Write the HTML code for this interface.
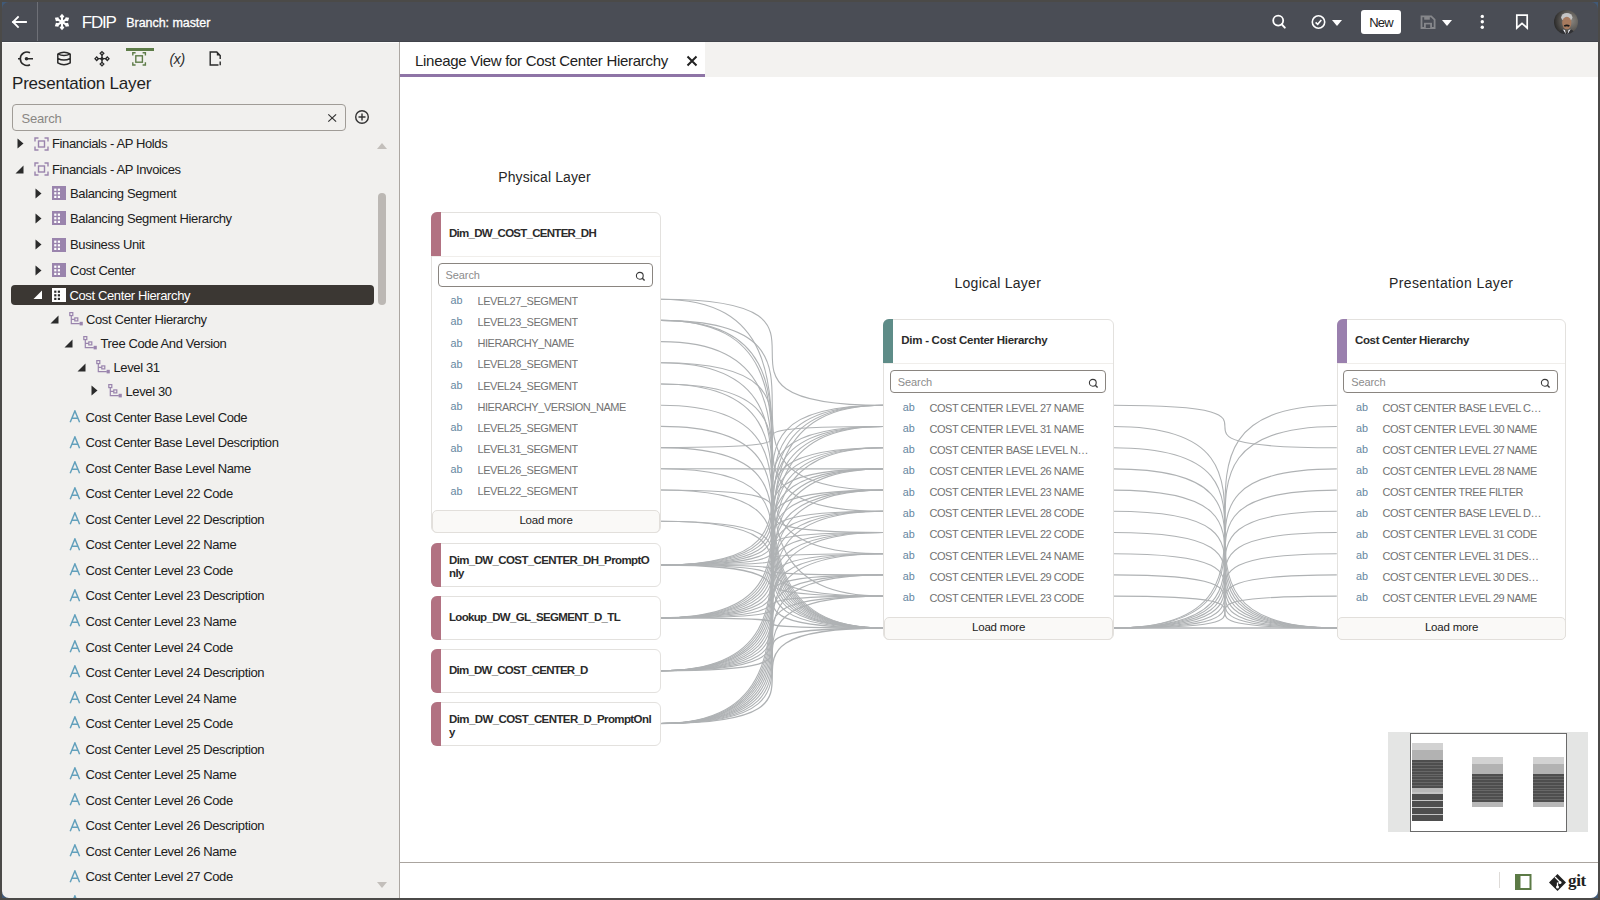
<!DOCTYPE html>
<html><head><meta charset="utf-8"><style>
html,body{margin:0;padding:0;width:1600px;height:900px;overflow:hidden;background:#4b4a48;}
.r{position:absolute;}
.t{position:absolute;white-space:nowrap;line-height:1;font-family:"Liberation Sans", sans-serif;}
</style></head><body>
<div class="r" style="left:0.00px;top:0.00px;width:1600.00px;height:900.00px;background:#4b4a48;"></div>
<div class="r" style="left:2.00px;top:2.00px;width:1596.00px;height:896.00px;background:#ffffff;"></div>
<div class="r" style="left:2.00px;top:2.00px;width:1596.00px;height:39.50px;background:#4a4d55;"></div>
<div class="r" style="left:37.00px;top:2.00px;width:1.00px;height:39.50px;background:#6e7077;"></div>
<div class="r" style="left:2.00px;top:40.50px;width:1596.00px;height:1.00px;background:#41444b;"></div>
<svg class="r" style="left:10.00px;top:14.00px" width="20" height="16" viewBox="0 0 20 16"><path d="M3 8 H16 M8 3 L3 8 L8 13" stroke="#fff" stroke-width="1.8" fill="none" stroke-linecap="square"/></svg>
<svg class="r" style="left:53.00px;top:13.00px" width="18" height="18" viewBox="0 0 18 18"><g transform="translate(9 9) scale(1.02) translate(-9 -9)"><g transform="rotate(0 9 9)"><path d="M9 0.9 L11.3 3.5 L9 6.1 L6.7 3.5 Z" fill="#fff"/><rect x="8" y="4" width="2" height="5" fill="#fff"/></g><g transform="rotate(60 9 9)"><path d="M9 0.9 L11.3 3.5 L9 6.1 L6.7 3.5 Z" fill="#fff"/><rect x="8" y="4" width="2" height="5" fill="#fff"/></g><g transform="rotate(120 9 9)"><path d="M9 0.9 L11.3 3.5 L9 6.1 L6.7 3.5 Z" fill="#fff"/><rect x="8" y="4" width="2" height="5" fill="#fff"/></g><g transform="rotate(180 9 9)"><path d="M9 0.9 L11.3 3.5 L9 6.1 L6.7 3.5 Z" fill="#fff"/><rect x="8" y="4" width="2" height="5" fill="#fff"/></g><g transform="rotate(240 9 9)"><path d="M9 0.9 L11.3 3.5 L9 6.1 L6.7 3.5 Z" fill="#fff"/><rect x="8" y="4" width="2" height="5" fill="#fff"/></g><g transform="rotate(300 9 9)"><path d="M9 0.9 L11.3 3.5 L9 6.1 L6.7 3.5 Z" fill="#fff"/><rect x="8" y="4" width="2" height="5" fill="#fff"/></g></g><circle cx="9" cy="9" r="1.7" fill="#fff"/></svg>
<div class="t" style="left:81.80px;top:13.81px;font-size:17px;color:#fff;font-weight:400;letter-spacing:-1.234px;">FDIP</div>
<div class="t" style="left:126.30px;top:16.72px;font-size:12.5px;color:#fff;font-weight:400;letter-spacing:-0.055px;-webkit-text-stroke:0.3px #fff;">Branch: master</div>
<svg class="r" style="left:1268.00px;top:12.00px" width="20" height="20" viewBox="0 0 20 20"><circle cx="10.2" cy="8.6" r="5" stroke="#fff" stroke-width="1.8" fill="none"/><path d="M13.8 12.3 L16.8 15.6" stroke="#fff" stroke-width="2" stroke-linecap="round"/></svg>
<svg class="r" style="left:1309.00px;top:13.00px" width="19" height="19" viewBox="0 0 19 19"><circle cx="9.5" cy="9" r="6.2" stroke="#fff" stroke-width="1.6" fill="none"/><path d="M6.6 9.3 L8.7 11.3 L12.3 7" stroke="#fff" stroke-width="1.6" fill="none"/></svg>
<svg class="r" style="left:1331.00px;top:19.00px" width="12" height="8" viewBox="0 0 12 8"><path d="M1 1 H11 L6 7 Z" fill="#fff"/></svg>
<div class="r" style="left:1360.50px;top:10.00px;width:40.00px;height:23.50px;background:#fff;border-radius:3px;"></div>
<div class="t" style="left:1081.00px;width:600px;text-align:center;top:16.00px;font-size:13px;color:#222;font-weight:400;letter-spacing:-0.839px;">New</div>
<svg class="r" style="left:1420.00px;top:15.00px" width="16" height="15" viewBox="0 0 16 15"><path d="M1.5 1.3 H11.2 L14.6 4.7 V13 H1.5 Z" stroke="#86878b" stroke-width="1.8" fill="none"/><rect x="4.2" y="1.5" width="5.6" height="3.2" fill="#86878b"/><rect x="4" y="7.8" width="8" height="5" fill="#86878b"/><rect x="5.8" y="9.4" width="4.4" height="3.6" fill="#4a4d55"/></svg>
<svg class="r" style="left:1441.00px;top:19.00px" width="12" height="8" viewBox="0 0 12 8"><path d="M1 1 H11 L6 7 Z" fill="#fff"/></svg>
<svg class="r" style="left:1479.00px;top:13.00px" width="7" height="18" viewBox="0 0 7 18"><circle cx="3.3" cy="3.4" r="1.7" fill="#fff"/><circle cx="3.3" cy="8.8" r="1.7" fill="#fff"/><circle cx="3.3" cy="14.3" r="1.7" fill="#fff"/></svg>
<svg class="r" style="left:1515.00px;top:14.00px" width="14" height="16" viewBox="0 0 14 16"><path d="M1.8 1.2 H12.2 V14 L7 9.3 L1.8 14 Z" stroke="#fff" stroke-width="1.7" fill="none" stroke-linejoin="miter"/></svg>
<svg class="r" style="left:1554.00px;top:10.00px" width="24" height="24" viewBox="0 0 24 24"><defs><radialGradient id="av" cx="0.7" cy="0.45" r="0.75"><stop offset="0" stop-color="#8a8782"/><stop offset="0.55" stop-color="#5a5753"/><stop offset="1" stop-color="#222"/></radialGradient><clipPath id="avc"><circle cx="12" cy="12" r="12"/></clipPath></defs><g clip-path="url(#avc)"><rect width="24" height="24" fill="url(#av)"/><ellipse cx="12.8" cy="7.2" rx="5.6" ry="4.3" fill="#c4c4c4"/><ellipse cx="12.8" cy="13" rx="4.6" ry="6.3" fill="#a77a5e"/><path d="M10.2 16 Q12.8 14.6 15.4 16" stroke="#1a1a1a" stroke-width="1.7" fill="none"/><path d="M1 25 L7.5 19.5 L12.5 23 L17.5 19.5 L24 25 Z" fill="#2f3034"/><path d="M9 19.5 L12 24.5 L11 20 Z M16.5 19.5 L13.5 24.5 L14.5 20 Z" fill="#e9ecf5"/></g></svg>
<div class="r" style="left:2.00px;top:41.50px;width:397.00px;height:856.50px;background:#f1f0ee;"></div>
<div class="r" style="left:399.00px;top:41.50px;width:1.00px;height:856.50px;background:#aca7a2;"></div>
<div class="r" style="left:2.00px;top:41.50px;width:397.00px;height:1.00px;background:#fcfcfb;"></div>
<div class="r" style="left:126.00px;top:48.00px;width:27.50px;height:2.50px;background:#5e7c48;"></div>
<svg class="r" style="left:16.00px;top:50.00px" width="20" height="18" viewBox="0 0 20 18"><path d="M14 2.7 A6.7 6.7 0 1 0 14 14.7" stroke="#2a2a2a" stroke-width="1.6" fill="none"/><path d="M2 8.7 H5 M9 8.7 H17" stroke="#2a2a2a" stroke-width="1.6"/><circle cx="10.5" cy="8.7" r="1.8" fill="#2a2a2a"/></svg>
<svg class="r" style="left:56.00px;top:50.00px" width="16" height="17" viewBox="0 0 16 17"><g stroke="#2a2a2a" stroke-width="1.5" fill="none"><path d="M1.8 3.8 Q8 0.6 14.2 3.8 M1.8 3.8 Q8 7 14.2 3.8 M1.8 3.8 V12.8 Q8 16.6 14.2 12.8 V3.8 M1.8 8.3 Q8 11.8 14.2 8.3"/></g></svg>
<svg class="r" style="left:93.00px;top:50.00px" width="18" height="18" viewBox="0 0 18 18"><g stroke="#2a2a2a" stroke-width="1.3" fill="none"><path d="M9 4.5 V13 M4.5 8.7 H13.5"/><path d="M9 1.6 L10.8 3.3 L9 5 L7.2 3.3 Z M9 12.4 L10.8 14.1 L9 15.8 L7.2 14.1 Z M2 8.7 L3.7 6.9 L5.4 8.7 L3.7 10.5 Z M12.6 8.7 L14.3 6.9 L16 8.7 L14.3 10.5 Z M9 7.4 L10.3 8.7 L9 10 L7.7 8.7 Z"/></g></svg>
<svg class="r" style="left:132.00px;top:51.50px" width="15" height="15" viewBox="0 0 15 15"><g stroke="#5e7c48" stroke-width="1.4" fill="none"><path d="M0.8 3.6 V0.8 H3.6 M10.6 0.8 H13.4 V3.6 M13.4 10.2 V13 H10.6 M3.6 13 H0.8 V10.2"/><rect x="3.8" y="3.8" width="6.6" height="6.4"/></g></svg>
<div class="t" style="left:169.50px;top:52.15px;font-size:14px;color:#2a2a2a;font-weight:400;letter-spacing:-0.3px;font-style:italic;">(x)</div>
<svg class="r" style="left:209.00px;top:51.00px" width="14" height="16" viewBox="0 0 14 16"><path d="M11.2 8 V4.5 L7.8 1 H1.2 V14 H9.5" stroke="#2a2a2a" stroke-width="1.4" fill="none"/><path d="M7.8 1 V4.5 H11.2 Z" fill="#2a2a2a"/><path d="M11.2 10.5 V14.2" stroke="#2a2a2a" stroke-width="1.4"/></svg>
<div class="t" style="left:12.00px;top:75.11px;font-size:17px;color:#1f1f1f;font-weight:400;letter-spacing:-0.2px;">Presentation Layer</div>
<div class="r" style="left:12.30px;top:103.80px;width:333.50px;height:27.40px;border:1.3px solid #a09c97;border-radius:4px;box-sizing:border-box;background:#f1f0ee;"></div>
<div class="t" style="left:21.50px;top:111.50px;font-size:13px;color:#8a8784;font-weight:400;letter-spacing:-0.2px;">Search</div>
<svg class="r" style="left:327.00px;top:112.50px" width="10" height="10" viewBox="0 0 10 10"><path d="M1.3 1.4 L9.1 8.6 M9.1 1.4 L1.3 8.6" stroke="#333" stroke-width="1.2"/></svg>
<svg class="r" style="left:354.00px;top:109.00px" width="16" height="16" viewBox="0 0 16 16"><circle cx="8" cy="8" r="6.3" stroke="#333" stroke-width="1.4" fill="none"/><path d="M8 4.5 V11.5 M4.5 8 H11.5" stroke="#333" stroke-width="1.4"/></svg>
<div class="r" style="left:378.00px;top:193.00px;width:8.00px;height:112.00px;background:#bcb8b4;border-radius:4px;"></div>
<svg class="r" style="left:376.00px;top:141.00px" width="12" height="9" viewBox="0 0 12 9"><path d="M1 8 L6 2 L11 8 Z" fill="#c3bfbb"/></svg>
<svg class="r" style="left:376.00px;top:881.00px" width="12" height="9" viewBox="0 0 12 9"><path d="M1 1 L6 7 L11 1 Z" fill="#c3bfbb"/></svg>
<svg class="r" style="left:17.00px;top:138.00px" width="7" height="11" viewBox="0 0 7 11"><path d="M0.5 0.5 L6.5 5.5 L0.5 10.5 Z" fill="#2b2b2b"/></svg>
<svg class="r" style="left:34.00px;top:136.50px" width="15" height="14" viewBox="0 0 15 14"><g stroke="#9a84ad" stroke-width="1.4" fill="none"><path d="M1 4.5 V1 H4.5 M10.5 1 H14 V4.5 M14 9.5 V13 H10.5 M4.5 13 H1 V9.5"/><rect x="4.5" y="4" width="6" height="6"/></g></svg>
<div class="t" style="left:52.00px;top:137.10px;font-size:13px;color:#202020;font-weight:400;letter-spacing:-0.38px;">Financials - AP Holds</div>
<svg class="r" style="left:15.00px;top:164.65px" width="9" height="9" viewBox="0 0 9 9"><path d="M8.5 0.5 V8.5 H0.5 Z" fill="#2b2b2b"/></svg>
<svg class="r" style="left:34.00px;top:162.15px" width="15" height="14" viewBox="0 0 15 14"><g stroke="#9a84ad" stroke-width="1.4" fill="none"><path d="M1 4.5 V1 H4.5 M10.5 1 H14 V4.5 M14 9.5 V13 H10.5 M4.5 13 H1 V9.5"/><rect x="4.5" y="4" width="6" height="6"/></g></svg>
<div class="t" style="left:52.00px;top:162.75px;font-size:13px;color:#202020;font-weight:400;letter-spacing:-0.38px;">Financials - AP Invoices</div>
<svg class="r" style="left:35.00px;top:187.90px" width="7" height="11" viewBox="0 0 7 11"><path d="M0.5 0.5 L6.5 5.5 L0.5 10.5 Z" fill="#2b2b2b"/></svg>
<svg class="r" style="left:52.00px;top:186.40px" width="14" height="14" viewBox="0 0 14 14"><rect x="0" y="0" width="14" height="14" fill="#9a84ad"/><rect x="2.2" y="2.6" width="2.2" height="2.2" fill="#fff"/><rect x="5.800000000000001" y="2.6" width="2.2" height="2.2" fill="#fff"/><rect x="2.2" y="6.2" width="2.2" height="2.2" fill="#fff"/><rect x="5.800000000000001" y="6.2" width="2.2" height="2.2" fill="#fff"/><rect x="2.2" y="9.8" width="2.2" height="2.2" fill="#fff"/><rect x="5.800000000000001" y="9.8" width="2.2" height="2.2" fill="#fff"/></svg>
<div class="t" style="left:70.00px;top:187.00px;font-size:13px;color:#202020;font-weight:400;letter-spacing:-0.38px;">Balancing Segment</div>
<svg class="r" style="left:35.00px;top:212.90px" width="7" height="11" viewBox="0 0 7 11"><path d="M0.5 0.5 L6.5 5.5 L0.5 10.5 Z" fill="#2b2b2b"/></svg>
<svg class="r" style="left:52.00px;top:211.40px" width="14" height="14" viewBox="0 0 14 14"><rect x="0" y="0" width="14" height="14" fill="#9a84ad"/><rect x="2.2" y="2.6" width="2.2" height="2.2" fill="#fff"/><rect x="5.800000000000001" y="2.6" width="2.2" height="2.2" fill="#fff"/><rect x="2.2" y="6.2" width="2.2" height="2.2" fill="#fff"/><rect x="5.800000000000001" y="6.2" width="2.2" height="2.2" fill="#fff"/><rect x="2.2" y="9.8" width="2.2" height="2.2" fill="#fff"/><rect x="5.800000000000001" y="9.8" width="2.2" height="2.2" fill="#fff"/></svg>
<div class="t" style="left:70.00px;top:212.00px;font-size:13px;color:#202020;font-weight:400;letter-spacing:-0.38px;">Balancing Segment Hierarchy</div>
<svg class="r" style="left:35.00px;top:239.15px" width="7" height="11" viewBox="0 0 7 11"><path d="M0.5 0.5 L6.5 5.5 L0.5 10.5 Z" fill="#2b2b2b"/></svg>
<svg class="r" style="left:52.00px;top:237.65px" width="14" height="14" viewBox="0 0 14 14"><rect x="0" y="0" width="14" height="14" fill="#9a84ad"/><rect x="2.2" y="2.6" width="2.2" height="2.2" fill="#fff"/><rect x="5.800000000000001" y="2.6" width="2.2" height="2.2" fill="#fff"/><rect x="2.2" y="6.2" width="2.2" height="2.2" fill="#fff"/><rect x="5.800000000000001" y="6.2" width="2.2" height="2.2" fill="#fff"/><rect x="2.2" y="9.8" width="2.2" height="2.2" fill="#fff"/><rect x="5.800000000000001" y="9.8" width="2.2" height="2.2" fill="#fff"/></svg>
<div class="t" style="left:70.00px;top:238.25px;font-size:13px;color:#202020;font-weight:400;letter-spacing:-0.38px;">Business Unit</div>
<svg class="r" style="left:35.00px;top:264.90px" width="7" height="11" viewBox="0 0 7 11"><path d="M0.5 0.5 L6.5 5.5 L0.5 10.5 Z" fill="#2b2b2b"/></svg>
<svg class="r" style="left:52.00px;top:263.40px" width="14" height="14" viewBox="0 0 14 14"><rect x="0" y="0" width="14" height="14" fill="#9a84ad"/><rect x="2.2" y="2.6" width="2.2" height="2.2" fill="#fff"/><rect x="5.800000000000001" y="2.6" width="2.2" height="2.2" fill="#fff"/><rect x="2.2" y="6.2" width="2.2" height="2.2" fill="#fff"/><rect x="5.800000000000001" y="6.2" width="2.2" height="2.2" fill="#fff"/><rect x="2.2" y="9.8" width="2.2" height="2.2" fill="#fff"/><rect x="5.800000000000001" y="9.8" width="2.2" height="2.2" fill="#fff"/></svg>
<div class="t" style="left:70.00px;top:264.00px;font-size:13px;color:#202020;font-weight:400;letter-spacing:-0.38px;">Cost Center</div>
<div class="r" style="left:11.00px;top:285.00px;width:363.30px;height:19.70px;background:#3b3733;border-radius:4px;"></div>
<svg class="r" style="left:33.00px;top:290.00px" width="10" height="10" viewBox="0 0 10 10"><path d="M9 0.5 V9 H0.5 Z" fill="#fff"/></svg>
<svg class="r" style="left:52.00px;top:287.50px" width="14" height="14" viewBox="0 0 14 14"><rect x="0" y="0" width="14" height="14" fill="#fff"/><rect x="2.2" y="2.6" width="2.2" height="2.2" fill="#2b2b2b"/><rect x="5.800000000000001" y="2.6" width="2.2" height="2.2" fill="#2b2b2b"/><rect x="2.2" y="6.2" width="2.2" height="2.2" fill="#2b2b2b"/><rect x="5.800000000000001" y="6.2" width="2.2" height="2.2" fill="#2b2b2b"/><rect x="2.2" y="9.8" width="2.2" height="2.2" fill="#2b2b2b"/><rect x="5.800000000000001" y="9.8" width="2.2" height="2.2" fill="#2b2b2b"/></svg>
<div class="t" style="left:69.50px;top:289.00px;font-size:13px;color:#fff;font-weight:400;letter-spacing:-0.38px;">Cost Center Hierarchy</div>
<svg class="r" style="left:49.80px;top:314.90px" width="9" height="9" viewBox="0 0 9 9"><path d="M8.5 0.5 V8.5 H0.5 Z" fill="#2b2b2b"/></svg>
<svg class="r" style="left:68.50px;top:312.40px" width="14" height="14" viewBox="0 0 14 14"><g stroke="#9a84ad" stroke-width="1.2" fill="none"><rect x="0.8" y="0.6" width="3" height="3"/><path d="M2.3 3.6 V11.6 H10.8 M2.3 7.4 H5.8"/><rect x="5.8" y="5.9" width="3" height="3"/></g><rect x="10.6" y="9.8" width="3.2" height="3.6" fill="#9a84ad"/></svg>
<div class="t" style="left:86.00px;top:313.00px;font-size:13px;color:#202020;font-weight:400;letter-spacing:-0.38px;">Cost Center Hierarchy</div>
<svg class="r" style="left:64.00px;top:338.90px" width="9" height="9" viewBox="0 0 9 9"><path d="M8.5 0.5 V8.5 H0.5 Z" fill="#2b2b2b"/></svg>
<svg class="r" style="left:83.00px;top:336.40px" width="14" height="14" viewBox="0 0 14 14"><g stroke="#9a84ad" stroke-width="1.2" fill="none"><rect x="0.8" y="0.6" width="3" height="3"/><path d="M2.3 3.6 V11.6 H10.8 M2.3 7.4 H5.8"/><rect x="5.8" y="5.9" width="3" height="3"/></g><rect x="10.6" y="9.8" width="3.2" height="3.6" fill="#9a84ad"/></svg>
<div class="t" style="left:100.50px;top:337.00px;font-size:13px;color:#202020;font-weight:400;letter-spacing:-0.38px;">Tree Code And Version</div>
<svg class="r" style="left:77.30px;top:362.65px" width="9" height="9" viewBox="0 0 9 9"><path d="M8.5 0.5 V8.5 H0.5 Z" fill="#2b2b2b"/></svg>
<svg class="r" style="left:96.00px;top:360.15px" width="14" height="14" viewBox="0 0 14 14"><g stroke="#9a84ad" stroke-width="1.2" fill="none"><rect x="0.8" y="0.6" width="3" height="3"/><path d="M2.3 3.6 V11.6 H10.8 M2.3 7.4 H5.8"/><rect x="5.8" y="5.9" width="3" height="3"/></g><rect x="10.6" y="9.8" width="3.2" height="3.6" fill="#9a84ad"/></svg>
<div class="t" style="left:113.50px;top:360.75px;font-size:13px;color:#202020;font-weight:400;letter-spacing:-0.38px;">Level 31</div>
<svg class="r" style="left:90.50px;top:385.40px" width="7" height="11" viewBox="0 0 7 11"><path d="M0.5 0.5 L6.5 5.5 L0.5 10.5 Z" fill="#2b2b2b"/></svg>
<svg class="r" style="left:108.00px;top:383.90px" width="14" height="14" viewBox="0 0 14 14"><g stroke="#9a84ad" stroke-width="1.2" fill="none"><rect x="0.8" y="0.6" width="3" height="3"/><path d="M2.3 3.6 V11.6 H10.8 M2.3 7.4 H5.8"/><rect x="5.8" y="5.9" width="3" height="3"/></g><rect x="10.6" y="9.8" width="3.2" height="3.6" fill="#9a84ad"/></svg>
<div class="t" style="left:125.50px;top:384.50px;font-size:13px;color:#202020;font-weight:400;letter-spacing:-0.38px;">Level 30</div>
<svg class="r" style="left:68.80px;top:410.05px" width="12" height="13" viewBox="0 0 12 13"><path d="M1.2 12.2 L5.9 0.9 L10.6 12.2 M3 8.3 H8.8" stroke="#62a0bc" stroke-width="1.45" fill="none"/></svg>
<div class="t" style="left:85.50px;top:410.75px;font-size:13px;color:#202020;font-weight:400;letter-spacing:-0.38px;">Cost Center Base Level Code</div>
<svg class="r" style="left:68.80px;top:435.58px" width="12" height="13" viewBox="0 0 12 13"><path d="M1.2 12.2 L5.9 0.9 L10.6 12.2 M3 8.3 H8.8" stroke="#62a0bc" stroke-width="1.45" fill="none"/></svg>
<div class="t" style="left:85.50px;top:436.28px;font-size:13px;color:#202020;font-weight:400;letter-spacing:-0.38px;">Cost Center Base Level Description</div>
<svg class="r" style="left:68.80px;top:461.11px" width="12" height="13" viewBox="0 0 12 13"><path d="M1.2 12.2 L5.9 0.9 L10.6 12.2 M3 8.3 H8.8" stroke="#62a0bc" stroke-width="1.45" fill="none"/></svg>
<div class="t" style="left:85.50px;top:461.81px;font-size:13px;color:#202020;font-weight:400;letter-spacing:-0.38px;">Cost Center Base Level Name</div>
<svg class="r" style="left:68.80px;top:486.64px" width="12" height="13" viewBox="0 0 12 13"><path d="M1.2 12.2 L5.9 0.9 L10.6 12.2 M3 8.3 H8.8" stroke="#62a0bc" stroke-width="1.45" fill="none"/></svg>
<div class="t" style="left:85.50px;top:487.34px;font-size:13px;color:#202020;font-weight:400;letter-spacing:-0.38px;">Cost Center Level 22 Code</div>
<svg class="r" style="left:68.80px;top:512.17px" width="12" height="13" viewBox="0 0 12 13"><path d="M1.2 12.2 L5.9 0.9 L10.6 12.2 M3 8.3 H8.8" stroke="#62a0bc" stroke-width="1.45" fill="none"/></svg>
<div class="t" style="left:85.50px;top:512.87px;font-size:13px;color:#202020;font-weight:400;letter-spacing:-0.38px;">Cost Center Level 22 Description</div>
<svg class="r" style="left:68.80px;top:537.70px" width="12" height="13" viewBox="0 0 12 13"><path d="M1.2 12.2 L5.9 0.9 L10.6 12.2 M3 8.3 H8.8" stroke="#62a0bc" stroke-width="1.45" fill="none"/></svg>
<div class="t" style="left:85.50px;top:538.40px;font-size:13px;color:#202020;font-weight:400;letter-spacing:-0.38px;">Cost Center Level 22 Name</div>
<svg class="r" style="left:68.80px;top:563.23px" width="12" height="13" viewBox="0 0 12 13"><path d="M1.2 12.2 L5.9 0.9 L10.6 12.2 M3 8.3 H8.8" stroke="#62a0bc" stroke-width="1.45" fill="none"/></svg>
<div class="t" style="left:85.50px;top:563.93px;font-size:13px;color:#202020;font-weight:400;letter-spacing:-0.38px;">Cost Center Level 23 Code</div>
<svg class="r" style="left:68.80px;top:588.76px" width="12" height="13" viewBox="0 0 12 13"><path d="M1.2 12.2 L5.9 0.9 L10.6 12.2 M3 8.3 H8.8" stroke="#62a0bc" stroke-width="1.45" fill="none"/></svg>
<div class="t" style="left:85.50px;top:589.46px;font-size:13px;color:#202020;font-weight:400;letter-spacing:-0.38px;">Cost Center Level 23 Description</div>
<svg class="r" style="left:68.80px;top:614.29px" width="12" height="13" viewBox="0 0 12 13"><path d="M1.2 12.2 L5.9 0.9 L10.6 12.2 M3 8.3 H8.8" stroke="#62a0bc" stroke-width="1.45" fill="none"/></svg>
<div class="t" style="left:85.50px;top:614.99px;font-size:13px;color:#202020;font-weight:400;letter-spacing:-0.38px;">Cost Center Level 23 Name</div>
<svg class="r" style="left:68.80px;top:639.82px" width="12" height="13" viewBox="0 0 12 13"><path d="M1.2 12.2 L5.9 0.9 L10.6 12.2 M3 8.3 H8.8" stroke="#62a0bc" stroke-width="1.45" fill="none"/></svg>
<div class="t" style="left:85.50px;top:640.52px;font-size:13px;color:#202020;font-weight:400;letter-spacing:-0.38px;">Cost Center Level 24 Code</div>
<svg class="r" style="left:68.80px;top:665.35px" width="12" height="13" viewBox="0 0 12 13"><path d="M1.2 12.2 L5.9 0.9 L10.6 12.2 M3 8.3 H8.8" stroke="#62a0bc" stroke-width="1.45" fill="none"/></svg>
<div class="t" style="left:85.50px;top:666.05px;font-size:13px;color:#202020;font-weight:400;letter-spacing:-0.38px;">Cost Center Level 24 Description</div>
<svg class="r" style="left:68.80px;top:690.88px" width="12" height="13" viewBox="0 0 12 13"><path d="M1.2 12.2 L5.9 0.9 L10.6 12.2 M3 8.3 H8.8" stroke="#62a0bc" stroke-width="1.45" fill="none"/></svg>
<div class="t" style="left:85.50px;top:691.58px;font-size:13px;color:#202020;font-weight:400;letter-spacing:-0.38px;">Cost Center Level 24 Name</div>
<svg class="r" style="left:68.80px;top:716.41px" width="12" height="13" viewBox="0 0 12 13"><path d="M1.2 12.2 L5.9 0.9 L10.6 12.2 M3 8.3 H8.8" stroke="#62a0bc" stroke-width="1.45" fill="none"/></svg>
<div class="t" style="left:85.50px;top:717.11px;font-size:13px;color:#202020;font-weight:400;letter-spacing:-0.38px;">Cost Center Level 25 Code</div>
<svg class="r" style="left:68.80px;top:741.94px" width="12" height="13" viewBox="0 0 12 13"><path d="M1.2 12.2 L5.9 0.9 L10.6 12.2 M3 8.3 H8.8" stroke="#62a0bc" stroke-width="1.45" fill="none"/></svg>
<div class="t" style="left:85.50px;top:742.64px;font-size:13px;color:#202020;font-weight:400;letter-spacing:-0.38px;">Cost Center Level 25 Description</div>
<svg class="r" style="left:68.80px;top:767.47px" width="12" height="13" viewBox="0 0 12 13"><path d="M1.2 12.2 L5.9 0.9 L10.6 12.2 M3 8.3 H8.8" stroke="#62a0bc" stroke-width="1.45" fill="none"/></svg>
<div class="t" style="left:85.50px;top:768.17px;font-size:13px;color:#202020;font-weight:400;letter-spacing:-0.38px;">Cost Center Level 25 Name</div>
<svg class="r" style="left:68.80px;top:793.00px" width="12" height="13" viewBox="0 0 12 13"><path d="M1.2 12.2 L5.9 0.9 L10.6 12.2 M3 8.3 H8.8" stroke="#62a0bc" stroke-width="1.45" fill="none"/></svg>
<div class="t" style="left:85.50px;top:793.70px;font-size:13px;color:#202020;font-weight:400;letter-spacing:-0.38px;">Cost Center Level 26 Code</div>
<svg class="r" style="left:68.80px;top:818.53px" width="12" height="13" viewBox="0 0 12 13"><path d="M1.2 12.2 L5.9 0.9 L10.6 12.2 M3 8.3 H8.8" stroke="#62a0bc" stroke-width="1.45" fill="none"/></svg>
<div class="t" style="left:85.50px;top:819.23px;font-size:13px;color:#202020;font-weight:400;letter-spacing:-0.38px;">Cost Center Level 26 Description</div>
<svg class="r" style="left:68.80px;top:844.06px" width="12" height="13" viewBox="0 0 12 13"><path d="M1.2 12.2 L5.9 0.9 L10.6 12.2 M3 8.3 H8.8" stroke="#62a0bc" stroke-width="1.45" fill="none"/></svg>
<div class="t" style="left:85.50px;top:844.76px;font-size:13px;color:#202020;font-weight:400;letter-spacing:-0.38px;">Cost Center Level 26 Name</div>
<svg class="r" style="left:68.80px;top:869.59px" width="12" height="13" viewBox="0 0 12 13"><path d="M1.2 12.2 L5.9 0.9 L10.6 12.2 M3 8.3 H8.8" stroke="#62a0bc" stroke-width="1.45" fill="none"/></svg>
<div class="t" style="left:85.50px;top:870.29px;font-size:13px;color:#202020;font-weight:400;letter-spacing:-0.38px;">Cost Center Level 27 Code</div>
<svg class="r" style="left:68.80px;top:895.12px" width="12" height="13" viewBox="0 0 12 13"><path d="M1.2 12.2 L5.9 0.9 L10.6 12.2 M3 8.3 H8.8" stroke="#62a0bc" stroke-width="1.45" fill="none"/></svg>
<div class="t" style="left:85.50px;top:895.82px;font-size:13px;color:#202020;font-weight:400;letter-spacing:-0.38px;">Cost Center Level 27 Description</div>
<div class="r" style="left:2.00px;top:898.00px;width:1596.00px;height:2.00px;background:#4b4a48;"></div>
<div class="r" style="left:400.00px;top:41.50px;width:1198.00px;height:35.00px;background:#f3f2f0;"></div>
<div class="r" style="left:400.00px;top:41.50px;width:305.00px;height:35.00px;background:#fff;"></div>
<div class="r" style="left:400.00px;top:73.50px;width:305.00px;height:3.00px;background:#8e74a6;"></div>
<div class="t" style="left:415.00px;top:52.90px;font-size:15px;color:#222;font-weight:400;letter-spacing:-0.29px;">Lineage View for Cost Center Hierarchy</div>
<svg class="r" style="left:686.00px;top:55.00px" width="12" height="12" viewBox="0 0 12 12"><path d="M1.5 1.5 L10.5 10.5 M10.5 1.5 L1.5 10.5" stroke="#222" stroke-width="2"/></svg>
<div class="r" style="left:400.00px;top:862.00px;width:1198.00px;height:1.00px;background:#aaa49f;"></div>
<div class="r" style="left:1499.00px;top:872.00px;width:1.00px;height:16.00px;background:#dedbd8;"></div>
<svg class="r" style="left:1515.00px;top:874.00px" width="17" height="16" viewBox="0 0 17 16"><rect x="0" y="0" width="16.5" height="16" fill="#5c7a46"/><rect x="5.5" y="2" width="9" height="12" fill="#fff"/></svg>
<svg class="r" style="left:1548.00px;top:873.00px" width="19" height="18" viewBox="0 0 19 18"><path d="M9.5 1 L18 9.5 L9.5 18 L1 9.5 Z" fill="#222"/><path d="M7 4 L12 9 M9.5 9.5 V14" stroke="#fff" stroke-width="1.3"/><circle cx="12" cy="9.5" r="1.5" fill="#fff"/><circle cx="9.5" cy="14" r="1.5" fill="#fff"/></svg>
<div class="t" style="left:1568.00px;top:872.11px;font-size:17px;color:#222;font-weight:700;letter-spacing:-0.3px;font-family:'Liberation Serif',serif;">git</div>
<div class="t" style="left:244.50px;width:600px;text-align:center;top:170.15px;font-size:14px;color:#262626;font-weight:400;letter-spacing:0.104px;">Physical Layer</div>
<div class="t" style="left:697.80px;width:600px;text-align:center;top:276.15px;font-size:14px;color:#262626;font-weight:400;letter-spacing:0.248px;">Logical Layer</div>
<div class="t" style="left:1151.20px;width:600px;text-align:center;top:276.15px;font-size:14px;color:#262626;font-weight:400;letter-spacing:0.387px;">Presentation Layer</div>
<svg class="r" style="left:0;top:0" width="1600" height="900"><path d="M661 299.20 C883.50 299.20 661.00 628.00 883.5 628.00" stroke="#afb2b4" stroke-width="1.1" fill="none"/><path d="M661 299.20 C883.50 299.20 661.00 405.30 883.5 405.30" stroke="#afb2b4" stroke-width="1.1" fill="none"/><path d="M661 320.40 C883.50 320.40 661.00 628.00 883.5 628.00" stroke="#afb2b4" stroke-width="1.1" fill="none"/><path d="M661 320.40 C883.50 320.40 661.00 490.10 883.5 490.10" stroke="#afb2b4" stroke-width="1.1" fill="none"/><path d="M661 320.40 C883.50 320.40 661.00 596.10 883.5 596.10" stroke="#afb2b4" stroke-width="1.1" fill="none"/><path d="M661 341.60 C883.50 341.60 661.00 628.00 883.5 628.00" stroke="#afb2b4" stroke-width="1.1" fill="none"/><path d="M661 362.80 C883.50 362.80 661.00 628.00 883.5 628.00" stroke="#afb2b4" stroke-width="1.1" fill="none"/><path d="M661 362.80 C883.50 362.80 661.00 511.30 883.5 511.30" stroke="#afb2b4" stroke-width="1.1" fill="none"/><path d="M661 384.00 C883.50 384.00 661.00 628.00 883.5 628.00" stroke="#afb2b4" stroke-width="1.1" fill="none"/><path d="M661 384.00 C883.50 384.00 661.00 553.70 883.5 553.70" stroke="#afb2b4" stroke-width="1.1" fill="none"/><path d="M661 405.20 C883.50 405.20 661.00 628.00 883.5 628.00" stroke="#afb2b4" stroke-width="1.1" fill="none"/><path d="M661 426.40 C883.50 426.40 661.00 628.00 883.5 628.00" stroke="#afb2b4" stroke-width="1.1" fill="none"/><path d="M661 447.60 C883.50 447.60 661.00 628.00 883.5 628.00" stroke="#afb2b4" stroke-width="1.1" fill="none"/><path d="M661 447.60 C883.50 447.60 661.00 426.50 883.5 426.50" stroke="#afb2b4" stroke-width="1.1" fill="none"/><path d="M661 468.80 C883.50 468.80 661.00 628.00 883.5 628.00" stroke="#afb2b4" stroke-width="1.1" fill="none"/><path d="M661 468.80 C883.50 468.80 661.00 468.90 883.5 468.90" stroke="#afb2b4" stroke-width="1.1" fill="none"/><path d="M661 490.00 C883.50 490.00 661.00 628.00 883.5 628.00" stroke="#afb2b4" stroke-width="1.1" fill="none"/><path d="M661 490.00 C883.50 490.00 661.00 532.50 883.5 532.50" stroke="#afb2b4" stroke-width="1.1" fill="none"/><path d="M661 521.30 C883.50 521.30 661.00 628.00 883.5 628.00" stroke="#afb2b4" stroke-width="1.1" fill="none"/><path d="M661 521.30 C883.50 521.30 661.00 596.10 883.5 596.10" stroke="#afb2b4" stroke-width="1.1" fill="none"/><path d="M661 565.00 C883.50 565.00 661.00 405.30 883.5 405.30" stroke="#afb2b4" stroke-width="1.1" fill="none"/><path d="M661 565.00 C883.50 565.00 661.00 426.50 883.5 426.50" stroke="#afb2b4" stroke-width="1.1" fill="none"/><path d="M661 565.00 C883.50 565.00 661.00 447.70 883.5 447.70" stroke="#afb2b4" stroke-width="1.1" fill="none"/><path d="M661 565.00 C883.50 565.00 661.00 468.90 883.5 468.90" stroke="#afb2b4" stroke-width="1.1" fill="none"/><path d="M661 565.00 C883.50 565.00 661.00 490.10 883.5 490.10" stroke="#afb2b4" stroke-width="1.1" fill="none"/><path d="M661 565.00 C883.50 565.00 661.00 511.30 883.5 511.30" stroke="#afb2b4" stroke-width="1.1" fill="none"/><path d="M661 565.00 C883.50 565.00 661.00 532.50 883.5 532.50" stroke="#afb2b4" stroke-width="1.1" fill="none"/><path d="M661 565.00 C883.50 565.00 661.00 553.70 883.5 553.70" stroke="#afb2b4" stroke-width="1.1" fill="none"/><path d="M661 565.00 C883.50 565.00 661.00 574.90 883.5 574.90" stroke="#afb2b4" stroke-width="1.1" fill="none"/><path d="M661 565.00 C883.50 565.00 661.00 596.10 883.5 596.10" stroke="#afb2b4" stroke-width="1.1" fill="none"/><path d="M661 565.00 C883.50 565.00 661.00 628.00 883.5 628.00" stroke="#afb2b4" stroke-width="1.3" fill="none"/><path d="M661 617.90 C883.50 617.90 661.00 405.30 883.5 405.30" stroke="#afb2b4" stroke-width="1.1" fill="none"/><path d="M661 617.90 C883.50 617.90 661.00 426.50 883.5 426.50" stroke="#afb2b4" stroke-width="1.1" fill="none"/><path d="M661 617.90 C883.50 617.90 661.00 447.70 883.5 447.70" stroke="#afb2b4" stroke-width="1.1" fill="none"/><path d="M661 617.90 C883.50 617.90 661.00 468.90 883.5 468.90" stroke="#afb2b4" stroke-width="1.1" fill="none"/><path d="M661 617.90 C883.50 617.90 661.00 490.10 883.5 490.10" stroke="#afb2b4" stroke-width="1.1" fill="none"/><path d="M661 617.90 C883.50 617.90 661.00 511.30 883.5 511.30" stroke="#afb2b4" stroke-width="1.1" fill="none"/><path d="M661 617.90 C883.50 617.90 661.00 532.50 883.5 532.50" stroke="#afb2b4" stroke-width="1.1" fill="none"/><path d="M661 617.90 C883.50 617.90 661.00 553.70 883.5 553.70" stroke="#afb2b4" stroke-width="1.1" fill="none"/><path d="M661 617.90 C883.50 617.90 661.00 574.90 883.5 574.90" stroke="#afb2b4" stroke-width="1.1" fill="none"/><path d="M661 617.90 C883.50 617.90 661.00 596.10 883.5 596.10" stroke="#afb2b4" stroke-width="1.1" fill="none"/><path d="M661 617.90 C883.50 617.90 661.00 628.00 883.5 628.00" stroke="#afb2b4" stroke-width="1.3" fill="none"/><path d="M661 670.70 C883.50 670.70 661.00 405.30 883.5 405.30" stroke="#afb2b4" stroke-width="1.1" fill="none"/><path d="M661 670.70 C883.50 670.70 661.00 426.50 883.5 426.50" stroke="#afb2b4" stroke-width="1.1" fill="none"/><path d="M661 670.70 C883.50 670.70 661.00 447.70 883.5 447.70" stroke="#afb2b4" stroke-width="1.1" fill="none"/><path d="M661 670.70 C883.50 670.70 661.00 468.90 883.5 468.90" stroke="#afb2b4" stroke-width="1.1" fill="none"/><path d="M661 670.70 C883.50 670.70 661.00 490.10 883.5 490.10" stroke="#afb2b4" stroke-width="1.1" fill="none"/><path d="M661 670.70 C883.50 670.70 661.00 511.30 883.5 511.30" stroke="#afb2b4" stroke-width="1.1" fill="none"/><path d="M661 670.70 C883.50 670.70 661.00 532.50 883.5 532.50" stroke="#afb2b4" stroke-width="1.1" fill="none"/><path d="M661 670.70 C883.50 670.70 661.00 553.70 883.5 553.70" stroke="#afb2b4" stroke-width="1.1" fill="none"/><path d="M661 670.70 C883.50 670.70 661.00 574.90 883.5 574.90" stroke="#afb2b4" stroke-width="1.1" fill="none"/><path d="M661 670.70 C883.50 670.70 661.00 596.10 883.5 596.10" stroke="#afb2b4" stroke-width="1.1" fill="none"/><path d="M661 670.70 C883.50 670.70 661.00 628.00 883.5 628.00" stroke="#afb2b4" stroke-width="1.3" fill="none"/><path d="M661 723.50 C883.50 723.50 661.00 405.30 883.5 405.30" stroke="#afb2b4" stroke-width="1.1" fill="none"/><path d="M661 723.50 C883.50 723.50 661.00 426.50 883.5 426.50" stroke="#afb2b4" stroke-width="1.1" fill="none"/><path d="M661 723.50 C883.50 723.50 661.00 447.70 883.5 447.70" stroke="#afb2b4" stroke-width="1.1" fill="none"/><path d="M661 723.50 C883.50 723.50 661.00 468.90 883.5 468.90" stroke="#afb2b4" stroke-width="1.1" fill="none"/><path d="M661 723.50 C883.50 723.50 661.00 490.10 883.5 490.10" stroke="#afb2b4" stroke-width="1.1" fill="none"/><path d="M661 723.50 C883.50 723.50 661.00 511.30 883.5 511.30" stroke="#afb2b4" stroke-width="1.1" fill="none"/><path d="M661 723.50 C883.50 723.50 661.00 532.50 883.5 532.50" stroke="#afb2b4" stroke-width="1.1" fill="none"/><path d="M661 723.50 C883.50 723.50 661.00 553.70 883.5 553.70" stroke="#afb2b4" stroke-width="1.1" fill="none"/><path d="M661 723.50 C883.50 723.50 661.00 574.90 883.5 574.90" stroke="#afb2b4" stroke-width="1.1" fill="none"/><path d="M661 723.50 C883.50 723.50 661.00 596.10 883.5 596.10" stroke="#afb2b4" stroke-width="1.1" fill="none"/><path d="M661 723.50 C883.50 723.50 661.00 628.00 883.5 628.00" stroke="#afb2b4" stroke-width="1.3" fill="none"/><path d="M1113 405.30 C1336.80 405.30 1113.00 447.70 1336.8 447.70" stroke="#afb2b4" stroke-width="1.1" fill="none"/><path d="M1113 426.50 C1336.80 426.50 1113.00 628.00 1336.8 628.00" stroke="#afb2b4" stroke-width="1.1" fill="none"/><path d="M1113 447.70 C1336.80 447.70 1113.00 628.00 1336.8 628.00" stroke="#afb2b4" stroke-width="1.1" fill="none"/><path d="M1113 468.90 C1336.80 468.90 1113.00 628.00 1336.8 628.00" stroke="#afb2b4" stroke-width="1.1" fill="none"/><path d="M1113 490.10 C1336.80 490.10 1113.00 628.00 1336.8 628.00" stroke="#afb2b4" stroke-width="1.1" fill="none"/><path d="M1113 511.30 C1336.80 511.30 1113.00 628.00 1336.8 628.00" stroke="#afb2b4" stroke-width="1.1" fill="none"/><path d="M1113 532.50 C1336.80 532.50 1113.00 628.00 1336.8 628.00" stroke="#afb2b4" stroke-width="1.1" fill="none"/><path d="M1113 553.70 C1336.80 553.70 1113.00 628.00 1336.8 628.00" stroke="#afb2b4" stroke-width="1.1" fill="none"/><path d="M1113 574.90 C1336.80 574.90 1113.00 628.00 1336.8 628.00" stroke="#afb2b4" stroke-width="1.1" fill="none"/><path d="M1113 596.10 C1336.80 596.10 1113.00 628.00 1336.8 628.00" stroke="#afb2b4" stroke-width="1.1" fill="none"/><path d="M1113 628.00 C1336.80 628.00 1113.00 405.30 1336.8 405.30" stroke="#afb2b4" stroke-width="1.1" fill="none"/><path d="M1113 628.00 C1336.80 628.00 1113.00 426.50 1336.8 426.50" stroke="#afb2b4" stroke-width="1.1" fill="none"/><path d="M1113 628.00 C1336.80 628.00 1113.00 468.90 1336.8 468.90" stroke="#afb2b4" stroke-width="1.1" fill="none"/><path d="M1113 628.00 C1336.80 628.00 1113.00 490.10 1336.8 490.10" stroke="#afb2b4" stroke-width="1.1" fill="none"/><path d="M1113 628.00 C1336.80 628.00 1113.00 511.30 1336.8 511.30" stroke="#afb2b4" stroke-width="1.1" fill="none"/><path d="M1113 628.00 C1336.80 628.00 1113.00 532.50 1336.8 532.50" stroke="#afb2b4" stroke-width="1.1" fill="none"/><path d="M1113 628.00 C1336.80 628.00 1113.00 553.70 1336.8 553.70" stroke="#afb2b4" stroke-width="1.1" fill="none"/><path d="M1113 628.00 C1336.80 628.00 1113.00 574.90 1336.8 574.90" stroke="#afb2b4" stroke-width="1.1" fill="none"/><path d="M1113 628.00 C1336.80 628.00 1113.00 596.10 1336.8 596.10" stroke="#afb2b4" stroke-width="1.1" fill="none"/><path d="M1113 628.00 C1336.80 628.00 1113.00 628.00 1336.8 628.00" stroke="#afb2b4" stroke-width="1.6" fill="none"/></svg>
<div class="r" style="left:431.00px;top:212.10px;width:230.00px;height:320.60px;background:#fff;border:1px solid #e3e1de;border-radius:6px;box-sizing:border-box;"></div>
<div class="r" style="left:431.00px;top:212.10px;width:10.00px;height:43.60px;background:#b27282;border-radius:6px 0 0 0;"></div>
<div class="t" style="left:449.00px;top:228.17px;font-size:11.5px;color:#2b2b2b;font-weight:700;letter-spacing:-0.729px;">Dim_DW_COST_CENTER_DH</div>
<div class="r" style="left:432.00px;top:255.70px;width:228.00px;height:1.00px;background:#f0eeeb;"></div>
<div class="r" style="left:437.80px;top:263.30px;width:215.20px;height:23.30px;border:1px solid #8a8580;border-radius:4px;box-sizing:border-box;background:#fff;"></div>
<div class="t" style="left:445.60px;top:270.49px;font-size:11px;color:#8c8c8c;font-weight:400;letter-spacing:-0.1px;">Search</div>
<svg class="r" style="left:635.00px;top:270.60px" width="11" height="11" viewBox="0 0 11 11"><circle cx="4.8" cy="4.8" r="3.4" stroke="#3a3a3a" stroke-width="1.1" fill="none"/><path d="M7.3 7.3 L9.6 9.6" stroke="#3a3a3a" stroke-width="1.4"/></svg>
<div class="t" style="left:450.60px;top:295.36px;font-size:10.8px;color:#6586a0;font-weight:400;letter-spacing:-0.1px;">ab</div>
<div class="t" style="left:477.50px;top:295.99px;font-size:11px;color:#727272;letter-spacing:-0.45px;max-width:170px;overflow:hidden;text-overflow:ellipsis;">LEVEL27_SEGMENT</div>
<div class="t" style="left:450.60px;top:316.49px;font-size:10.8px;color:#6586a0;font-weight:400;letter-spacing:-0.1px;">ab</div>
<div class="t" style="left:477.50px;top:317.12px;font-size:11px;color:#727272;letter-spacing:-0.45px;max-width:170px;overflow:hidden;text-overflow:ellipsis;">LEVEL23_SEGMENT</div>
<div class="t" style="left:450.60px;top:337.62px;font-size:10.8px;color:#6586a0;font-weight:400;letter-spacing:-0.1px;">ab</div>
<div class="t" style="left:477.50px;top:338.25px;font-size:11px;color:#727272;letter-spacing:-0.45px;max-width:170px;overflow:hidden;text-overflow:ellipsis;">HIERARCHY_NAME</div>
<div class="t" style="left:450.60px;top:358.75px;font-size:10.8px;color:#6586a0;font-weight:400;letter-spacing:-0.1px;">ab</div>
<div class="t" style="left:477.50px;top:359.38px;font-size:11px;color:#727272;letter-spacing:-0.45px;max-width:170px;overflow:hidden;text-overflow:ellipsis;">LEVEL28_SEGMENT</div>
<div class="t" style="left:450.60px;top:379.88px;font-size:10.8px;color:#6586a0;font-weight:400;letter-spacing:-0.1px;">ab</div>
<div class="t" style="left:477.50px;top:380.51px;font-size:11px;color:#727272;letter-spacing:-0.45px;max-width:170px;overflow:hidden;text-overflow:ellipsis;">LEVEL24_SEGMENT</div>
<div class="t" style="left:450.60px;top:401.01px;font-size:10.8px;color:#6586a0;font-weight:400;letter-spacing:-0.1px;">ab</div>
<div class="t" style="left:477.50px;top:401.64px;font-size:11px;color:#727272;letter-spacing:-0.45px;max-width:170px;overflow:hidden;text-overflow:ellipsis;">HIERARCHY_VERSION_NAME</div>
<div class="t" style="left:450.60px;top:422.14px;font-size:10.8px;color:#6586a0;font-weight:400;letter-spacing:-0.1px;">ab</div>
<div class="t" style="left:477.50px;top:422.77px;font-size:11px;color:#727272;letter-spacing:-0.45px;max-width:170px;overflow:hidden;text-overflow:ellipsis;">LEVEL25_SEGMENT</div>
<div class="t" style="left:450.60px;top:443.27px;font-size:10.8px;color:#6586a0;font-weight:400;letter-spacing:-0.1px;">ab</div>
<div class="t" style="left:477.50px;top:443.90px;font-size:11px;color:#727272;letter-spacing:-0.45px;max-width:170px;overflow:hidden;text-overflow:ellipsis;">LEVEL31_SEGMENT</div>
<div class="t" style="left:450.60px;top:464.40px;font-size:10.8px;color:#6586a0;font-weight:400;letter-spacing:-0.1px;">ab</div>
<div class="t" style="left:477.50px;top:465.03px;font-size:11px;color:#727272;letter-spacing:-0.45px;max-width:170px;overflow:hidden;text-overflow:ellipsis;">LEVEL26_SEGMENT</div>
<div class="t" style="left:450.60px;top:485.53px;font-size:10.8px;color:#6586a0;font-weight:400;letter-spacing:-0.1px;">ab</div>
<div class="t" style="left:477.50px;top:486.16px;font-size:11px;color:#727272;letter-spacing:-0.45px;max-width:170px;overflow:hidden;text-overflow:ellipsis;">LEVEL22_SEGMENT</div>
<div class="r" style="left:431.80px;top:510.10px;width:228.40px;height:22.60px;background:#faf9f7;border:1px solid #e2dfdb;border-radius:5px;box-sizing:border-box;"></div>
<div class="t" style="left:246.00px;width:600px;text-align:center;top:514.97px;font-size:11.5px;color:#222;font-weight:400;letter-spacing:-0.2px;">Load more</div>
<div class="r" style="left:883.20px;top:319.00px;width:230.80px;height:320.60px;background:#fff;border:1px solid #e3e1de;border-radius:6px;box-sizing:border-box;"></div>
<div class="r" style="left:883.20px;top:319.00px;width:10.00px;height:43.60px;background:#5e8c88;border-radius:6px 0 0 0;"></div>
<div class="t" style="left:901.30px;top:335.07px;font-size:11.5px;color:#2b2b2b;font-weight:700;letter-spacing:-0.273px;">Dim - Cost Center Hierarchy</div>
<div class="r" style="left:884.20px;top:362.60px;width:228.80px;height:1.00px;background:#f0eeeb;"></div>
<div class="r" style="left:890.00px;top:370.20px;width:216.00px;height:23.30px;border:1px solid #8a8580;border-radius:4px;box-sizing:border-box;background:#fff;"></div>
<div class="t" style="left:897.80px;top:377.39px;font-size:11px;color:#8c8c8c;font-weight:400;letter-spacing:-0.1px;">Search</div>
<svg class="r" style="left:1088.00px;top:377.50px" width="11" height="11" viewBox="0 0 11 11"><circle cx="4.8" cy="4.8" r="3.4" stroke="#3a3a3a" stroke-width="1.1" fill="none"/><path d="M7.3 7.3 L9.6 9.6" stroke="#3a3a3a" stroke-width="1.4"/></svg>
<div class="t" style="left:902.80px;top:402.06px;font-size:10.8px;color:#6586a0;font-weight:400;letter-spacing:-0.1px;">ab</div>
<div class="t" style="left:929.40px;top:402.69px;font-size:11px;color:#727272;letter-spacing:-0.45px;max-width:162px;overflow:hidden;text-overflow:ellipsis;">COST CENTER LEVEL 27 NAME</div>
<div class="t" style="left:902.80px;top:423.19px;font-size:10.8px;color:#6586a0;font-weight:400;letter-spacing:-0.1px;">ab</div>
<div class="t" style="left:929.40px;top:423.82px;font-size:11px;color:#727272;letter-spacing:-0.45px;max-width:162px;overflow:hidden;text-overflow:ellipsis;">COST CENTER LEVEL 31 NAME</div>
<div class="t" style="left:902.80px;top:444.32px;font-size:10.8px;color:#6586a0;font-weight:400;letter-spacing:-0.1px;">ab</div>
<div class="t" style="left:929.40px;top:444.95px;font-size:11px;color:#727272;letter-spacing:-0.45px;max-width:162px;overflow:hidden;text-overflow:ellipsis;">COST CENTER BASE LEVEL NAME</div>
<div class="t" style="left:902.80px;top:465.45px;font-size:10.8px;color:#6586a0;font-weight:400;letter-spacing:-0.1px;">ab</div>
<div class="t" style="left:929.40px;top:466.08px;font-size:11px;color:#727272;letter-spacing:-0.45px;max-width:162px;overflow:hidden;text-overflow:ellipsis;">COST CENTER LEVEL 26 NAME</div>
<div class="t" style="left:902.80px;top:486.58px;font-size:10.8px;color:#6586a0;font-weight:400;letter-spacing:-0.1px;">ab</div>
<div class="t" style="left:929.40px;top:487.21px;font-size:11px;color:#727272;letter-spacing:-0.45px;max-width:162px;overflow:hidden;text-overflow:ellipsis;">COST CENTER LEVEL 23 NAME</div>
<div class="t" style="left:902.80px;top:507.71px;font-size:10.8px;color:#6586a0;font-weight:400;letter-spacing:-0.1px;">ab</div>
<div class="t" style="left:929.40px;top:508.34px;font-size:11px;color:#727272;letter-spacing:-0.45px;max-width:162px;overflow:hidden;text-overflow:ellipsis;">COST CENTER LEVEL 28 CODE</div>
<div class="t" style="left:902.80px;top:528.84px;font-size:10.8px;color:#6586a0;font-weight:400;letter-spacing:-0.1px;">ab</div>
<div class="t" style="left:929.40px;top:529.47px;font-size:11px;color:#727272;letter-spacing:-0.45px;max-width:162px;overflow:hidden;text-overflow:ellipsis;">COST CENTER LEVEL 22 CODE</div>
<div class="t" style="left:902.80px;top:549.97px;font-size:10.8px;color:#6586a0;font-weight:400;letter-spacing:-0.1px;">ab</div>
<div class="t" style="left:929.40px;top:550.60px;font-size:11px;color:#727272;letter-spacing:-0.45px;max-width:162px;overflow:hidden;text-overflow:ellipsis;">COST CENTER LEVEL 24 NAME</div>
<div class="t" style="left:902.80px;top:571.10px;font-size:10.8px;color:#6586a0;font-weight:400;letter-spacing:-0.1px;">ab</div>
<div class="t" style="left:929.40px;top:571.73px;font-size:11px;color:#727272;letter-spacing:-0.45px;max-width:162px;overflow:hidden;text-overflow:ellipsis;">COST CENTER LEVEL 29 CODE</div>
<div class="t" style="left:902.80px;top:592.23px;font-size:10.8px;color:#6586a0;font-weight:400;letter-spacing:-0.1px;">ab</div>
<div class="t" style="left:929.40px;top:592.86px;font-size:11px;color:#727272;letter-spacing:-0.45px;max-width:162px;overflow:hidden;text-overflow:ellipsis;">COST CENTER LEVEL 23 CODE</div>
<div class="r" style="left:884.00px;top:617.00px;width:229.20px;height:22.60px;background:#faf9f7;border:1px solid #e2dfdb;border-radius:5px;box-sizing:border-box;"></div>
<div class="t" style="left:698.60px;width:600px;text-align:center;top:621.87px;font-size:11.5px;color:#222;font-weight:400;letter-spacing:-0.2px;">Load more</div>
<div class="r" style="left:1336.60px;top:319.00px;width:229.80px;height:320.60px;background:#fff;border:1px solid #e3e1de;border-radius:6px;box-sizing:border-box;"></div>
<div class="r" style="left:1336.60px;top:319.00px;width:10.00px;height:43.60px;background:#9a80ae;border-radius:6px 0 0 0;"></div>
<div class="t" style="left:1355.00px;top:335.07px;font-size:11.5px;color:#2b2b2b;font-weight:700;letter-spacing:-0.354px;">Cost Center Hierarchy</div>
<div class="r" style="left:1337.60px;top:362.60px;width:227.80px;height:1.00px;background:#f0eeeb;"></div>
<div class="r" style="left:1343.40px;top:370.20px;width:215.00px;height:23.30px;border:1px solid #8a8580;border-radius:4px;box-sizing:border-box;background:#fff;"></div>
<div class="t" style="left:1351.20px;top:377.39px;font-size:11px;color:#8c8c8c;font-weight:400;letter-spacing:-0.1px;">Search</div>
<svg class="r" style="left:1540.40px;top:377.50px" width="11" height="11" viewBox="0 0 11 11"><circle cx="4.8" cy="4.8" r="3.4" stroke="#3a3a3a" stroke-width="1.1" fill="none"/><path d="M7.3 7.3 L9.6 9.6" stroke="#3a3a3a" stroke-width="1.4"/></svg>
<div class="t" style="left:1356.00px;top:402.06px;font-size:10.8px;color:#6586a0;font-weight:400;letter-spacing:-0.1px;">ab</div>
<div class="t" style="left:1382.40px;top:402.69px;font-size:11px;color:#727272;letter-spacing:-0.45px;max-width:162px;overflow:hidden;text-overflow:ellipsis;">COST CENTER BASE LEVEL CODE</div>
<div class="t" style="left:1356.00px;top:423.19px;font-size:10.8px;color:#6586a0;font-weight:400;letter-spacing:-0.1px;">ab</div>
<div class="t" style="left:1382.40px;top:423.82px;font-size:11px;color:#727272;letter-spacing:-0.45px;max-width:162px;overflow:hidden;text-overflow:ellipsis;">COST CENTER LEVEL 30 NAME</div>
<div class="t" style="left:1356.00px;top:444.32px;font-size:10.8px;color:#6586a0;font-weight:400;letter-spacing:-0.1px;">ab</div>
<div class="t" style="left:1382.40px;top:444.95px;font-size:11px;color:#727272;letter-spacing:-0.45px;max-width:162px;overflow:hidden;text-overflow:ellipsis;">COST CENTER LEVEL 27 NAME</div>
<div class="t" style="left:1356.00px;top:465.45px;font-size:10.8px;color:#6586a0;font-weight:400;letter-spacing:-0.1px;">ab</div>
<div class="t" style="left:1382.40px;top:466.08px;font-size:11px;color:#727272;letter-spacing:-0.45px;max-width:162px;overflow:hidden;text-overflow:ellipsis;">COST CENTER LEVEL 28 NAME</div>
<div class="t" style="left:1356.00px;top:486.58px;font-size:10.8px;color:#6586a0;font-weight:400;letter-spacing:-0.1px;">ab</div>
<div class="t" style="left:1382.40px;top:487.21px;font-size:11px;color:#727272;letter-spacing:-0.45px;max-width:162px;overflow:hidden;text-overflow:ellipsis;">COST CENTER TREE FILTER</div>
<div class="t" style="left:1356.00px;top:507.71px;font-size:10.8px;color:#6586a0;font-weight:400;letter-spacing:-0.1px;">ab</div>
<div class="t" style="left:1382.40px;top:508.34px;font-size:11px;color:#727272;letter-spacing:-0.45px;max-width:162px;overflow:hidden;text-overflow:ellipsis;">COST CENTER BASE LEVEL DESCRIPTION</div>
<div class="t" style="left:1356.00px;top:528.84px;font-size:10.8px;color:#6586a0;font-weight:400;letter-spacing:-0.1px;">ab</div>
<div class="t" style="left:1382.40px;top:529.47px;font-size:11px;color:#727272;letter-spacing:-0.45px;max-width:162px;overflow:hidden;text-overflow:ellipsis;">COST CENTER LEVEL 31 CODE</div>
<div class="t" style="left:1356.00px;top:549.97px;font-size:10.8px;color:#6586a0;font-weight:400;letter-spacing:-0.1px;">ab</div>
<div class="t" style="left:1382.40px;top:550.60px;font-size:11px;color:#727272;letter-spacing:-0.45px;max-width:162px;overflow:hidden;text-overflow:ellipsis;">COST CENTER LEVEL 31 DESCRIPTION</div>
<div class="t" style="left:1356.00px;top:571.10px;font-size:10.8px;color:#6586a0;font-weight:400;letter-spacing:-0.1px;">ab</div>
<div class="t" style="left:1382.40px;top:571.73px;font-size:11px;color:#727272;letter-spacing:-0.45px;max-width:162px;overflow:hidden;text-overflow:ellipsis;">COST CENTER LEVEL 30 DESCRIPTION</div>
<div class="t" style="left:1356.00px;top:592.23px;font-size:10.8px;color:#6586a0;font-weight:400;letter-spacing:-0.1px;">ab</div>
<div class="t" style="left:1382.40px;top:592.86px;font-size:11px;color:#727272;letter-spacing:-0.45px;max-width:162px;overflow:hidden;text-overflow:ellipsis;">COST CENTER LEVEL 29 NAME</div>
<div class="r" style="left:1337.40px;top:617.00px;width:228.20px;height:22.60px;background:#faf9f7;border:1px solid #e2dfdb;border-radius:5px;box-sizing:border-box;"></div>
<div class="t" style="left:1151.50px;width:600px;text-align:center;top:621.87px;font-size:11.5px;color:#222;font-weight:400;letter-spacing:-0.2px;">Load more</div>
<div class="r" style="left:431.00px;top:542.70px;width:230.00px;height:44.60px;background:#fff;border:1px solid #e3e1de;border-radius:6px;box-sizing:border-box;"></div>
<div class="r" style="left:431.00px;top:542.70px;width:10.00px;height:44.60px;background:#b27282;border-radius:6px 0 0 6px;"></div>
<div class="t" style="left:449.00px;top:555.27px;font-size:11.5px;color:#2b2b2b;font-weight:700;letter-spacing:-0.617px;">Dim_DW_COST_CENTER_DH_PromptO</div>
<div class="t" style="left:449.00px;top:568.27px;font-size:11.5px;color:#2b2b2b;font-weight:700;letter-spacing:-0.617px;">nly</div>
<div class="r" style="left:431.00px;top:595.70px;width:230.00px;height:44.30px;background:#fff;border:1px solid #e3e1de;border-radius:6px;box-sizing:border-box;"></div>
<div class="r" style="left:431.00px;top:595.70px;width:10.00px;height:44.30px;background:#b27282;border-radius:6px 0 0 6px;"></div>
<div class="t" style="left:449.00px;top:612.12px;font-size:11.5px;color:#2b2b2b;font-weight:700;letter-spacing:-0.674px;">Lookup_DW_GL_SEGMENT_D_TL</div>
<div class="r" style="left:431.00px;top:649.00px;width:230.00px;height:44.30px;background:#fff;border:1px solid #e3e1de;border-radius:6px;box-sizing:border-box;"></div>
<div class="r" style="left:431.00px;top:649.00px;width:10.00px;height:44.30px;background:#b27282;border-radius:6px 0 0 6px;"></div>
<div class="t" style="left:449.00px;top:665.42px;font-size:11.5px;color:#2b2b2b;font-weight:700;letter-spacing:-0.775px;">Dim_DW_COST_CENTER_D</div>
<div class="r" style="left:431.00px;top:702.30px;width:230.00px;height:43.70px;background:#fff;border:1px solid #e3e1de;border-radius:6px;box-sizing:border-box;"></div>
<div class="r" style="left:431.00px;top:702.30px;width:10.00px;height:43.70px;background:#b27282;border-radius:6px 0 0 6px;"></div>
<div class="t" style="left:449.00px;top:714.42px;font-size:11.5px;color:#2b2b2b;font-weight:700;letter-spacing:-0.594px;">Dim_DW_COST_CENTER_D_PromptOnl</div>
<div class="t" style="left:449.00px;top:727.42px;font-size:11.5px;color:#2b2b2b;font-weight:700;letter-spacing:-0.594px;">y</div>
<div class="r" style="left:1388.00px;top:732.00px;width:200.00px;height:100.00px;background:#e4e5e4;"></div>
<div class="r" style="left:1409.60px;top:733.00px;width:157.40px;height:98.50px;background:#fff;border:1px solid #6a6a6a;box-sizing:border-box;"></div>
<div class="r" style="left:1412.30px;top:743.00px;width:31.00px;height:6.60px;background:#d2d2d2;"></div>
<div class="r" style="left:1412.30px;top:749.60px;width:31.00px;height:10.00px;background:#b2b2b2;"></div>
<div class="r" style="left:1412.30px;top:759.60px;width:31.00px;height:28.40px;background:#4e4e4e;"></div>
<div class="r" style="left:1412.30px;top:762.40px;width:31.00px;height:0.50px;background:#676767;"></div>
<div class="r" style="left:1412.30px;top:765.20px;width:31.00px;height:0.50px;background:#676767;"></div>
<div class="r" style="left:1412.30px;top:768.00px;width:31.00px;height:0.50px;background:#676767;"></div>
<div class="r" style="left:1412.30px;top:770.80px;width:31.00px;height:0.50px;background:#676767;"></div>
<div class="r" style="left:1412.30px;top:773.60px;width:31.00px;height:0.50px;background:#676767;"></div>
<div class="r" style="left:1412.30px;top:776.40px;width:31.00px;height:0.50px;background:#676767;"></div>
<div class="r" style="left:1412.30px;top:779.20px;width:31.00px;height:0.50px;background:#676767;"></div>
<div class="r" style="left:1412.30px;top:782.00px;width:31.00px;height:0.50px;background:#676767;"></div>
<div class="r" style="left:1412.30px;top:784.80px;width:31.00px;height:0.50px;background:#676767;"></div>
<div class="r" style="left:1412.30px;top:788.00px;width:31.00px;height:5.00px;background:#b8b8b8;"></div>
<div class="r" style="left:1412.30px;top:792.00px;width:31.00px;height:29.00px;background:#c4c4c4;"></div>
<div class="r" style="left:1412.30px;top:793.50px;width:31.00px;height:6.30px;background:#4e4e4e;"></div>
<div class="r" style="left:1412.30px;top:800.50px;width:31.00px;height:6.30px;background:#4e4e4e;"></div>
<div class="r" style="left:1412.30px;top:807.50px;width:31.00px;height:6.30px;background:#4e4e4e;"></div>
<div class="r" style="left:1412.30px;top:814.50px;width:31.00px;height:6.30px;background:#4e4e4e;"></div>
<div class="r" style="left:1472.40px;top:757.00px;width:31.00px;height:6.60px;background:#d2d2d2;"></div>
<div class="r" style="left:1472.40px;top:763.60px;width:31.00px;height:10.00px;background:#b2b2b2;"></div>
<div class="r" style="left:1472.40px;top:773.60px;width:31.00px;height:28.40px;background:#4e4e4e;"></div>
<div class="r" style="left:1472.40px;top:776.40px;width:31.00px;height:0.50px;background:#676767;"></div>
<div class="r" style="left:1472.40px;top:779.20px;width:31.00px;height:0.50px;background:#676767;"></div>
<div class="r" style="left:1472.40px;top:782.00px;width:31.00px;height:0.50px;background:#676767;"></div>
<div class="r" style="left:1472.40px;top:784.80px;width:31.00px;height:0.50px;background:#676767;"></div>
<div class="r" style="left:1472.40px;top:787.60px;width:31.00px;height:0.50px;background:#676767;"></div>
<div class="r" style="left:1472.40px;top:790.40px;width:31.00px;height:0.50px;background:#676767;"></div>
<div class="r" style="left:1472.40px;top:793.20px;width:31.00px;height:0.50px;background:#676767;"></div>
<div class="r" style="left:1472.40px;top:796.00px;width:31.00px;height:0.50px;background:#676767;"></div>
<div class="r" style="left:1472.40px;top:798.80px;width:31.00px;height:0.50px;background:#676767;"></div>
<div class="r" style="left:1472.40px;top:802.00px;width:31.00px;height:5.00px;background:#b8b8b8;"></div>
<div class="r" style="left:1533.00px;top:757.00px;width:31.00px;height:6.60px;background:#d2d2d2;"></div>
<div class="r" style="left:1533.00px;top:763.60px;width:31.00px;height:10.00px;background:#b2b2b2;"></div>
<div class="r" style="left:1533.00px;top:773.60px;width:31.00px;height:28.40px;background:#4e4e4e;"></div>
<div class="r" style="left:1533.00px;top:776.40px;width:31.00px;height:0.50px;background:#676767;"></div>
<div class="r" style="left:1533.00px;top:779.20px;width:31.00px;height:0.50px;background:#676767;"></div>
<div class="r" style="left:1533.00px;top:782.00px;width:31.00px;height:0.50px;background:#676767;"></div>
<div class="r" style="left:1533.00px;top:784.80px;width:31.00px;height:0.50px;background:#676767;"></div>
<div class="r" style="left:1533.00px;top:787.60px;width:31.00px;height:0.50px;background:#676767;"></div>
<div class="r" style="left:1533.00px;top:790.40px;width:31.00px;height:0.50px;background:#676767;"></div>
<div class="r" style="left:1533.00px;top:793.20px;width:31.00px;height:0.50px;background:#676767;"></div>
<div class="r" style="left:1533.00px;top:796.00px;width:31.00px;height:0.50px;background:#676767;"></div>
<div class="r" style="left:1533.00px;top:798.80px;width:31.00px;height:0.50px;background:#676767;"></div>
<div class="r" style="left:1533.00px;top:802.00px;width:31.00px;height:5.00px;background:#b8b8b8;"></div>
<svg class="r" style="left:2.00px;top:2.00px" width="7" height="7" viewBox="0 0 7 7"><path d="M0 0 H7 A7 7 0 0 0 0 7 Z" fill="#415a78"/></svg>
<svg class="r" style="left:1591.00px;top:2.00px" width="7" height="7" viewBox="0 0 7 7"><path d="M7 0 V7 A7 7 0 0 0 0 0 Z" fill="#415a78"/></svg>
<svg class="r" style="left:2.00px;top:891.00px" width="7" height="7" viewBox="0 0 7 7"><path d="M0 7 V0 A7 7 0 0 0 7 7 Z" fill="#415a78"/></svg>
<svg class="r" style="left:1591.00px;top:891.00px" width="7" height="7" viewBox="0 0 7 7"><path d="M7 7 H0 A7 7 0 0 0 7 0 Z" fill="#415a78"/></svg>
</body></html>
